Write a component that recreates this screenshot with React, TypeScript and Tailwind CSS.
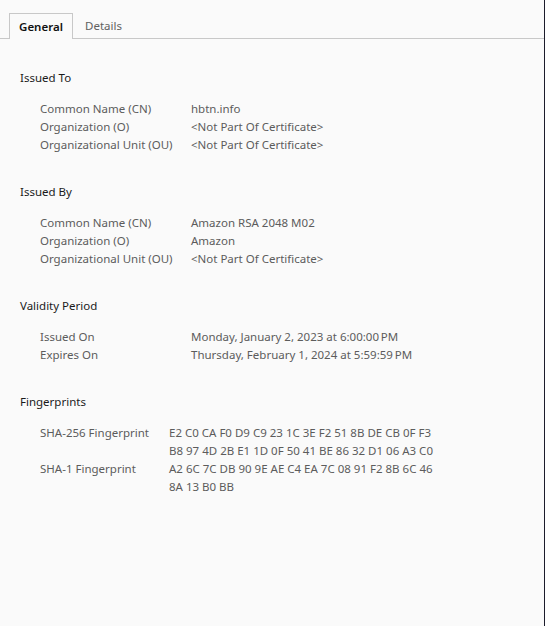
import React from 'react';

type Row = { label: string; value: string[] };
type Section = { title: string; labelWidth: string; rows: Row[] };

const NP = '<Not Part Of Certificate>';

const sections: Section[] = [
  {
    title: 'Issued To',
    labelWidth: 'w-[151px]',
    rows: [
      { label: 'Common Name (CN)', value: ['hbtn.info'] },
      { label: 'Organization (O)', value: [NP] },
      { label: 'Organizational Unit (OU)', value: [NP] },
    ],
  },
  {
    title: 'Issued By',
    labelWidth: 'w-[151px]',
    rows: [
      { label: 'Common Name (CN)', value: ['Amazon RSA 2048 M02'] },
      { label: 'Organization (O)', value: ['Amazon'] },
      { label: 'Organizational Unit (OU)', value: [NP] },
    ],
  },
  {
    title: 'Validity Period',
    labelWidth: 'w-[151px]',
    rows: [
      { label: 'Issued On', value: ['Monday, January 2, 2023 at 6:00:00\u2009PM'] },
      { label: 'Expires On', value: ['Thursday, February 1, 2024 at 5:59:59\u2009PM'] },
    ],
  },
  {
    title: 'Fingerprints',
    labelWidth: 'w-[129px]',
    rows: [
      {
        label: 'SHA-256 Fingerprint',
        value: [
          'E2 C0 CA F0 D9 C9 23 1C 3E F2 51 8B DE CB 0F F3',
          'B8 97 4D 2B E1 1D 0F 50 41 BE 86 32 D1 06 A3 C0',
        ],
      },
      {
        label: 'SHA-1 Fingerprint',
        value: ['A2 6C 7C DB 90 9E AE C4 EA 7C 08 91 F2 8B 6C 46', '8A 13 B0 BB'],
      },
    ],
  },
];

export default function App() {
  return (
    <div
      className="w-[545px] h-[626px] bg-[#fafafa] border-r border-[#1c1c2b] text-[11.5px] leading-[18px]"
      style={{ fontFamily: '"Segoe UI", "Noto Sans", "Open Sans", sans-serif' }}
    >
      {/* Tabs */}
      <div className="flex items-end h-[39px] border-b border-[#c8c8c8] pl-[9px]">
        <div className="h-[26px] w-[64px] -mb-px bg-[#fafafa] border border-b-0 border-[#c8c8c8] flex items-center justify-center font-semibold text-[#111]">
          General
        </div>
        <div className="h-[26px] w-[61px] -mb-px flex items-center justify-center text-[#616161]">Details</div>
      </div>

      <div className="pl-[20px] pt-[30px]">
        {sections.map((s) => (
          <div key={s.title} className="mb-[29px]">
            <div className="text-[#1a1a1a]">{s.title}</div>
            <div className="mt-[13px] pl-[20px]">
              {s.rows.map((r) => (
                <div key={r.label} className="flex text-[#5c5c5c]">
                  <div className={`${s.labelWidth} shrink-0`}>{r.label}</div>
                  <div>
                    {r.value.map((v, i) => (
                      <div key={i}>{v}</div>
                    ))}
                  </div>
                </div>
              ))}
            </div>
          </div>
        ))}
      </div>
    </div>
  );
}
